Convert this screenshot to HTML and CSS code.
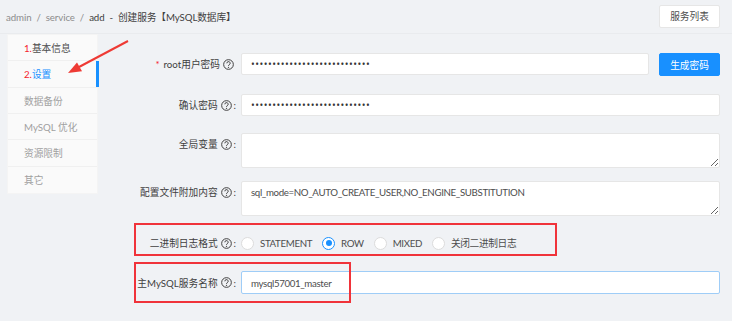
FILE: index.html
```html
<!DOCTYPE html>
<html lang="zh-CN">

<head>
  <meta charset="UTF-8">
  <meta name="viewport" content="width=device-width, initial-scale=1.0">
  <title>创建服务 - MySQL数据库</title>
  <link rel="stylesheet" href="styles.css">
</head>

<body>
  <div class="page">
    <div class="header">
      <div class="breadcrumb">
        <span class="crumb">admin</span>
        <span class="sep">/</span>
        <span class="crumb">service</span>
        <span class="sep">/</span>
        <span class="crumb current">add</span>
        <span class="sep current">-</span>
        <span class="crumb current">创建服务【MySQL数据库】</span>
      </div>
      <button class="button">服务列表</button>
    </div>

    <div class="main">
      <ul class="steps">
        <li class="step done"><span class="num">1.</span>基本信息</li>
        <li class="step active"><span class="num">2.</span>设置</li>
        <li class="step">数据备份</li>
        <li class="step">MySQL 优化</li>
        <li class="step">资源限制</li>
        <li class="step">其它</li>
      </ul>

      <form class="form">
        <div class="row row-pass">
          <label class="label no-colon"><span class="required">*</span>root用户密码<svg class="help" viewBox="0 0 10 10"><circle cx="5" cy="5" r="4.4"/><path d="M3.5 3.9a1.5 1.5 0 1 1 2.2 1.3c-.5.3-.7.5-.7 1.1"/><circle class="dot" cx="5" cy="7.6" r=".6"/></svg></label>
          <div class="control inline">
            <input type="password" class="input" value="abcdefghijklmnopqrstuvwxyz12">
            <button type="button" class="button primary">生成密码</button>
          </div>
        </div>

        <div class="row row-confirm">
          <label class="label">确认密码<svg class="help" viewBox="0 0 10 10"><circle cx="5" cy="5" r="4.4"/><path d="M3.5 3.9a1.5 1.5 0 1 1 2.2 1.3c-.5.3-.7.5-.7 1.1"/><circle class="dot" cx="5" cy="7.6" r=".6"/></svg><span class="colon">:</span></label>
          <div class="control">
            <input type="password" class="input" value="abcdefghijklmnopqrstuvwxyz12">
          </div>
        </div>

        <div class="row row-vars">
          <label class="label">全局变量<svg class="help" viewBox="0 0 10 10"><circle cx="5" cy="5" r="4.4"/><path d="M3.5 3.9a1.5 1.5 0 1 1 2.2 1.3c-.5.3-.7.5-.7 1.1"/><circle class="dot" cx="5" cy="7.6" r=".6"/></svg><span class="colon">:</span></label>
          <div class="control">
            <textarea class="textarea"></textarea>
          </div>
        </div>

        <div class="row row-conf">
          <label class="label">配置文件附加内容<svg class="help" viewBox="0 0 10 10"><circle cx="5" cy="5" r="4.4"/><path d="M3.5 3.9a1.5 1.5 0 1 1 2.2 1.3c-.5.3-.7.5-.7 1.1"/><circle class="dot" cx="5" cy="7.6" r=".6"/></svg><span class="colon">:</span></label>
          <div class="control">
            <textarea class="textarea">sql_mode=NO_AUTO_CREATE_USER,NO_ENGINE_SUBSTITUTION</textarea>
          </div>
        </div>

        <div class="row row-binlog">
          <label class="label">二进制日志格式<svg class="help" viewBox="0 0 10 10"><circle cx="5" cy="5" r="4.4"/><path d="M3.5 3.9a1.5 1.5 0 1 1 2.2 1.3c-.5.3-.7.5-.7 1.1"/><circle class="dot" cx="5" cy="7.6" r=".6"/></svg><span class="colon">:</span></label>
          <div class="control radios">
            <span class="radio"><span class="circle"></span>STATEMENT</span>
            <span class="radio checked"><span class="circle"></span>ROW</span>
            <span class="radio"><span class="circle"></span>MIXED</span>
            <span class="radio"><span class="circle"></span>关闭二进制日志</span>
          </div>
        </div>

        <div class="row row-master">
          <label class="label">主MySQL服务名称<svg class="help" viewBox="0 0 10 10"><circle cx="5" cy="5" r="4.4"/><path d="M3.5 3.9a1.5 1.5 0 1 1 2.2 1.3c-.5.3-.7.5-.7 1.1"/><circle class="dot" cx="5" cy="7.6" r=".6"/></svg><span class="colon">:</span></label>
          <div class="control">
            <input type="text" class="input focused" value="mysql57001_master">
          </div>
        </div>
      </form>
    </div>

    <!-- annotations drawn over the screenshot -->
    <div class="mark mark-binlog"></div>
    <div class="mark mark-master"></div>
    <svg class="arrow" viewBox="0 0 732 321">
      <path d="M128 41 L79 67" />
      <polygon points="68,73 77,62.5 82,71.3" />
    </svg>
  </div>
</body>

</html>
```

FILE: styles.css
```css
* {
  box-sizing: border-box;
}

body {
  margin: 0;
  background: #f0f2f5;
  font-family: Lato, "Noto Sans CJK SC", sans-serif;
  font-size: 9.7px;
  color: #404040;
}

.page {
  position: relative;
  width: 732px;
  height: 321px;
  overflow: hidden;
}

.header {
  display: flex;
  justify-content: space-between;
  align-items: center;
  height: 34px;
  padding: 0 12px 1px 6px;
  border-bottom: 1px solid #e9ebee;
}

.breadcrumb {
  display: flex;
  align-items: center;
  gap: 5px;
  line-height: 14px;
  margin-top: 1px;
  letter-spacing: -0.1px;
}

.crumb,
.sep {
  color: #8c8c8c;
}

.current {
  color: #404040;
}

.button {
  font-family: inherit;
  font-size: 9.7px;
  height: 23px;
  width: 61px;
  padding: 0;
  border: 1px solid #e6e6e6;
  border-radius: 2px;
  background: #fff;
  color: #4d4d4d;
  cursor: pointer;
}

.button.primary {
  background: #1890ff;
  border-color: #1890ff;
  color: #fff;
  flex: none;
}

.main {
  display: flex;
  align-items: flex-start;
  padding-left: 7px;
}

.steps {
  list-style: none;
  margin: 0;
  padding: 0;
  width: 91px;
  background: #fafafa;
  border: 1px solid #f4f4f4;
}

.step {
  height: 26.33px;
  line-height: 26px;
  padding-left: 16px;
  border-bottom: 1px solid #f0f0f0;
  color: #a0a0a0;
}

.step:last-child {
  border-bottom: none;
}

.step .num {
  color: #f5222d;
}

.step.done {
  color: #4d4d4d;
}

.step.active {
  color: #1890ff;
  box-shadow: inset -3px 0 0 #1890ff;
  margin-right: -2px;
}

.form {
  flex: 1;
  margin: 0;
  padding-top: 19px;
  margin-right: 12px;
}

.row {
  display: grid;
  grid-template-columns: 143px 1fr;
  align-items: start;
}

.label {
  display: flex;
  align-items: center;
  justify-content: flex-end;
  padding-right: 5px;
  height: 22px;
  color: #404040;
  white-space: nowrap;
}

.label.no-colon {
  padding-right: 7px;
}

.required {
  color: #f5222d;
  margin-right: 4px;
}

.help {
  width: 11px;
  height: 11px;
  margin-left: 3px;
  fill: none;
  stroke: #404040;
  stroke-width: 0.9;
}

.help .dot {
  fill: #404040;
  stroke: none;
}

.colon {
  margin-left: 2px;
}

.control.inline {
  display: flex;
  gap: 10px;
}

.input,
.textarea {
  display: block;
  width: 100%;
  font-family: inherit;
  font-size: 9.7px;
  color: #4d4d4d;
  background: #fff;
  border: 1px solid #e6e6e6;
  border-radius: 2px;
  padding: 0 9px;
  outline: none;
  letter-spacing: -0.35px;
}

.input {
  height: 22px;
}

.input[type="password"] {
  font-family: "Open Sans", sans-serif;
  font-size: 10px;
  letter-spacing: 0.5px;
  color: #333;
}

.input.focused {
  height: 23px;
  border-color: #9fcdf7;
}

.textarea {
  height: 35px;
  padding-top: 3px;
  line-height: 14px;
  resize: vertical;
}

.row-pass {
  margin-bottom: 18px;
}

.row-confirm {
  margin-bottom: 17px;
}

.row-vars {
  margin-bottom: 13px;
}

.row-conf {
  margin-bottom: 16px;
}

.row-binlog {
  margin-bottom: 17px;
}

.row-master .label {
  height: 23px;
}

.radios {
  display: flex;
  align-items: center;
  height: 22px;
}

.radio {
  display: flex;
  align-items: center;
  margin-right: 10px;
  color: #4d4d4d;
  letter-spacing: -0.35px;
}

.radio .circle {
  width: 13px;
  height: 13px;
  margin-right: 6px;
  border: 1px solid #dcdcdc;
  border-radius: 50%;
  background: #fff;
  position: relative;
}

.radio.checked .circle {
  border-color: #1890ff;
}

.radio.checked .circle::after {
  content: "";
  position: absolute;
  left: 2.5px;
  top: 2.5px;
  width: 6px;
  height: 6px;
  border-radius: 50%;
  background: #1890ff;
}

.mark {
  position: absolute;
  border: 2px solid #f0333a;
  pointer-events: none;
}

.mark-binlog {
  left: 134px;
  top: 223px;
  width: 423px;
  height: 33px;
}

.mark-master {
  left: 134px;
  top: 262px;
  width: 217px;
  height: 41px;
}

.arrow {
  position: absolute;
  left: 0;
  top: 0;
  width: 732px;
  height: 321px;
  pointer-events: none;
}

.arrow path {
  stroke: #ee3a34;
  stroke-width: 2;
  fill: none;
}

.arrow polygon {
  fill: #ee3a34;
}
```
